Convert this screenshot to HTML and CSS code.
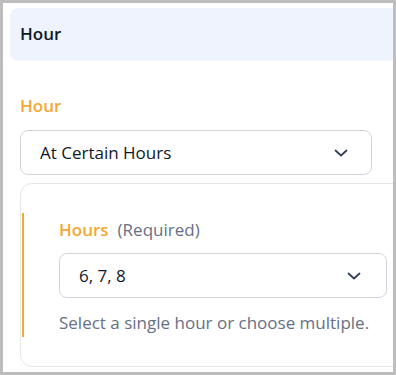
FILE: index.html
```html
<!DOCTYPE html>
<html>
<head>
<meta charset="utf-8">
<link rel="stylesheet" href="styles.css">
</head>
<body>
<div class="frame">
  <div class="header"><span class="header-title">Hour</span></div>
  <div class="section">
    <div class="label">Hour</div>
    <div class="select select-main">
      <span class="select-value">At Certain Hours</span>
      <svg class="chev" width="14" height="8" viewBox="0 0 14 8"><path d="M1.5 1.5 L7 6.5 L12.5 1.5" fill="none" stroke="#334155" stroke-width="1.8" stroke-linecap="round" stroke-linejoin="round"/></svg>
    </div>
    <div class="card">
      <div class="card-inner">
        <div class="field-label"><span class="label-strong">Hours</span><span class="label-req">(Required)</span></div>
        <div class="select select-sub">
          <span class="select-value">6, 7, 8</span>
          <svg class="chev" width="14" height="8" viewBox="0 0 14 8"><path d="M1.5 1.5 L7 6.5 L12.5 1.5" fill="none" stroke="#334155" stroke-width="1.8" stroke-linecap="round" stroke-linejoin="round"/></svg>
        </div>
        <div class="help">Select a single hour or choose multiple.</div>
      </div>
    </div>
  </div>
</div>
</body>
</html>
```
FILE: styles.css
```css
* { box-sizing: border-box; }
html, body { margin: 0; padding: 0; background: #bdbdbd; }
body { font-family: "Open Sans", "Noto Sans", sans-serif; }
.frame {
  width: 396px;
  height: 375px;
  border: 3px solid #bdbdbd;
  background: #ffffff;
  overflow: hidden;
  padding: 5px 0 0 7px;
}
.header {
  height: 53px;
  margin-right: -20px;
  background: #eef3fe;
  border-radius: 8px 0 0 8px;
  display: flex;
  align-items: center;
  padding-left: 10px;
}
.header-title {
  font-size: 17px;
  line-height: 24px;
  font-weight: 600;
  color: #101828;
  margin-top: -2px;
}
.section {
  padding: 33px 0 0 10px;
}
.label {
  font-size: 17px;
  font-weight: 600;
  color: #f5a733;
  line-height: 24px;
}
.select {
  display: flex;
  align-items: center;
  justify-content: space-between;
  border: 1px solid #d0d5dd;
  border-radius: 8px;
  height: 45px;
  background: #fff;
}
.select-main {
  margin-top: 12px;
  width: 352px;
  padding: 0 23px 0 19px;
}
.select-value {
  font-size: 17px;
  line-height: 24px;
  color: #101828;
}
.card {
  margin-top: 8px;
  margin-right: -30px;
  border: 1px solid #e4e7ec;
  border-radius: 12px;
  padding: 29px 0 29px 1px;
}
.card-inner {
  border-left: 2px solid #f5a733;
  padding-left: 35px;
}
.field-label {
  display: flex;
  align-items: baseline;
  gap: 9px;
  line-height: 34px;
}
.label-strong {
  font-size: 17px;
  font-weight: 600;
  color: #f5a733;
}
.label-req {
  font-size: 17px;
  color: #667085;
}
.select-sub {
  margin-top: 6px;
  width: 328px;
  padding: 0 25px 0 19px;
}
.help {
  margin-top: 12px;
  font-size: 17px;
  line-height: 26px;
  padding-bottom: 1px;
  color: #667085;
}
```
